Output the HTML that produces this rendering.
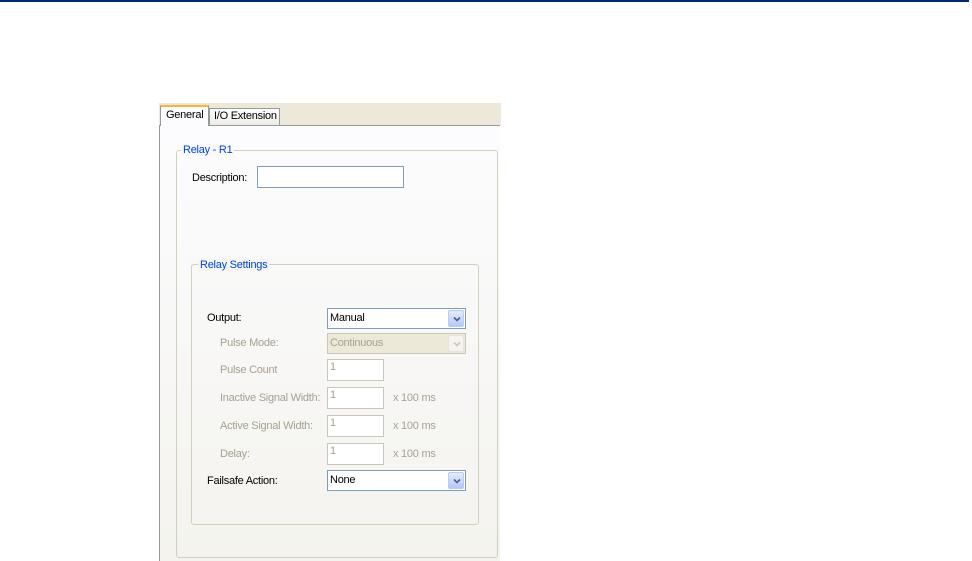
<!DOCTYPE html><html><head><style>
body{margin:0;width:972px;height:561px;background:#fff;position:relative;overflow:hidden;font-family:"Liberation Sans",sans-serif;font-size:11px;letter-spacing:-0.25px;}
.a{position:absolute;white-space:nowrap}
.lbl{position:absolute;color:#000;font-size:11px;white-space:nowrap}
.dis{color:#a5a290}
.box{position:absolute;background:#fff;border:1px solid #7f9db9;box-sizing:border-box}
.dbox{position:absolute;background:#fff;border:1px solid #c9c7ba;box-sizing:border-box;color:#a5a290;padding-left:2px;font-size:11px;line-height:15px}
.grp{position:absolute;border:1px solid #d0d0bf;border-radius:3px;box-sizing:border-box}
.gt{position:absolute;color:#0046d5;background:#f8f8f6;padding:0 2px;font-size:11px;white-space:nowrap}
.dd{position:absolute;height:21px;border:1px solid #7f9db9;background:#fff;box-sizing:border-box;padding-left:2px;line-height:19px;font-size:11px}
.btn{position:absolute;right:1px;top:1px;width:16px;height:17px;background:linear-gradient(#e4ecfe,#b4c8f6);border:1px solid #b9cbf3;box-sizing:border-box;border-radius:2px}
.btn svg{position:absolute;left:4px;top:5px}
</style></head><body>
<div class="a" style="left:0;top:0;width:969px;height:2px;background:#002a6e"></div>
<div class="a" style="left:159px;top:103px;width:342px;height:22px;background:#ece9d8"></div>
<div class="a" style="left:159px;top:125px;width:341px;height:436px;background:linear-gradient(#fcfcfe,#f4f3ee);border-left:1px solid #919b9c;border-top:1px solid #919b9c;box-sizing:border-box"></div>
<div class="a" style="left:160px;top:105px;width:49px;height:21px;background:#fcfcfe;border:1px solid #919b9c;border-bottom:none;border-top:2px solid #f7b33d;box-sizing:border-box;padding:2px 0 0 5px">General</div>
<div class="a" style="left:209px;top:108px;width:71px;height:17px;background:linear-gradient(#fff,#ecebe6);border:1px solid #919b9c;border-bottom:none;box-sizing:border-box;padding:1px 0 0 4px">I/O Extension</div>
<div class="grp" style="left:176px;top:150px;width:322px;height:408px"></div>
<div class="gt" style="left:181px;top:144px">Relay - R1</div>
<div class="lbl" style="left:192px;top:172px">Description:</div>
<div class="box" style="left:257px;top:166px;width:147px;height:22px"></div>
<div class="grp" style="left:191px;top:264px;width:288px;height:261px"></div>
<div class="gt" style="left:198px;top:259px;background:#f6f5f2">Relay Settings</div>
<div class="lbl" style="left:207px;top:312px">Output:</div>
<div class="dd" style="left:327px;top:308px;width:139px">Manual<div class="btn"><svg width="8" height="6"><path d="M1 1.5L4 4.5L7 1.5" stroke="#4d6185" stroke-width="1.6" fill="none"/></svg></div></div>
<div class="lbl dis" style="left:220px;top:337px">Pulse Mode:</div>
<div class="dd" style="left:327px;top:333px;width:139px;background:#ece9d8;border-color:#c9c7ba;color:#a5a290">Continuous<div class="btn" style="background:#f4f3ee;border-color:#e6e4da"><svg width="8" height="6"><path d="M1 1.5L4 4.5L7 1.5" stroke="#c9c7ba" stroke-width="1.6" fill="none"/></svg></div></div>
<div class="lbl dis" style="left:220px;top:364px">Pulse Count</div>
<div class="dbox" style="left:327px;top:359px;width:57px;height:22px">1</div>
<div class="lbl dis" style="left:220px;top:392px">Inactive Signal Width:</div>
<div class="dbox" style="left:327px;top:387px;width:57px;height:22px">1</div>
<div class="lbl dis" style="left:393px;top:392px">x 100 ms</div>
<div class="lbl dis" style="left:220px;top:420px">Active Signal Width:</div>
<div class="dbox" style="left:327px;top:415px;width:57px;height:22px">1</div>
<div class="lbl dis" style="left:393px;top:420px">x 100 ms</div>
<div class="lbl dis" style="left:220px;top:448px">Delay:</div>
<div class="dbox" style="left:327px;top:443px;width:57px;height:22px">1</div>
<div class="lbl dis" style="left:393px;top:448px">x 100 ms</div>
<div class="lbl" style="left:207px;top:475px">Failsafe Action:</div>
<div class="dd" style="left:327px;top:470px;width:139px">None<div class="btn"><svg width="8" height="6"><path d="M1 1.5L4 4.5L7 1.5" stroke="#4d6185" stroke-width="1.6" fill="none"/></svg></div></div>
</body></html>
